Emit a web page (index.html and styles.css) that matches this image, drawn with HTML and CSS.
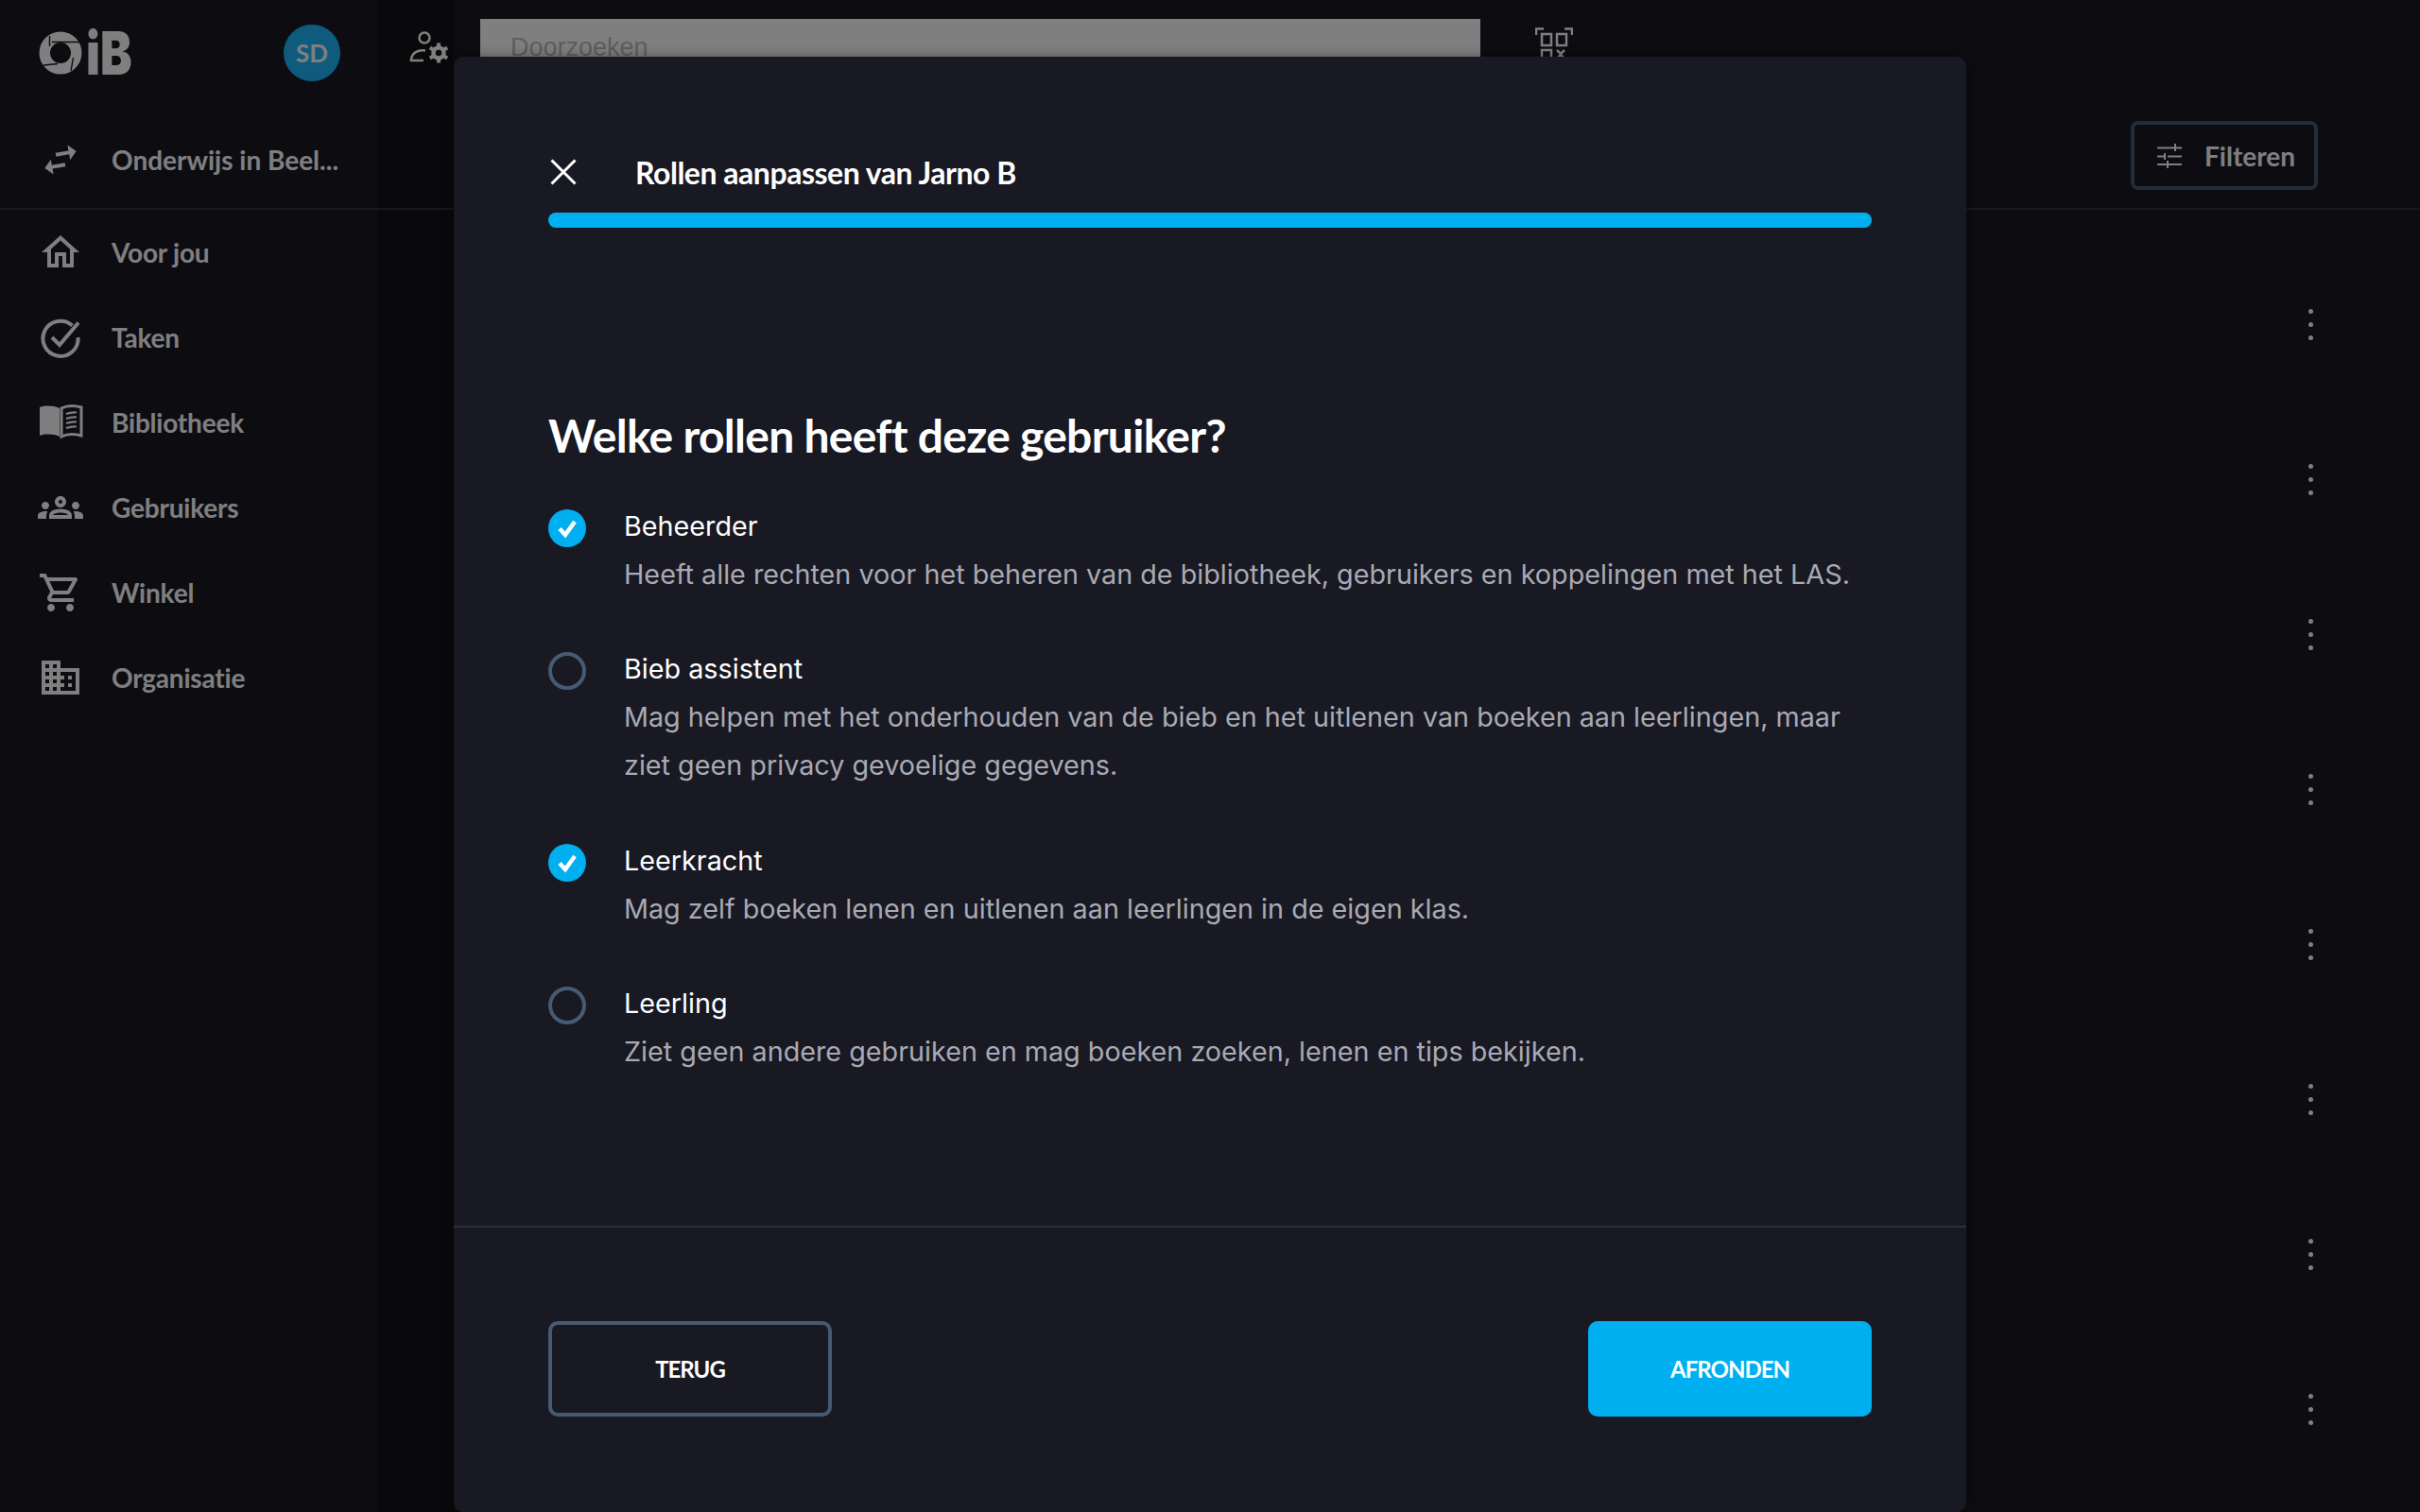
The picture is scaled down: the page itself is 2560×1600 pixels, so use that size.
FILE: index.html
```html
<!DOCTYPE html>
<html lang="nl">
<head>
<meta charset="utf-8">
<title>Rollen aanpassen</title>
<link rel="stylesheet" href="styles.css">
</head>
<body>
<div class="app">
  <aside class="sidebar">
    <div class="brand">
      <div class="logo">
        <svg class="logo-mark" viewBox="0 0 46 46"><circle cx="23" cy="23" r="16.750" fill="none" stroke="#fff" stroke-width="11.500"/><path d="M11.500 5V16M14 11.500H45M34 42L36.500 28M5 36L20 34.500" fill="none" stroke="#181923" stroke-width="1.400"/></svg>
        <span class="logo-text">iB</span>
      </div>
      <div class="avatar">SD</div>
    </div>
    <div class="switch">
      <svg class="nav-icon" viewBox="0 0 24 24"><path transform="rotate(-10 12 12)" d="M6.990 11L3 15l3.990 4v-3H14v-2H6.990v-3zM21 9l-3.990-4v3H10v2h7.010v3L21 9z"/></svg>
      <span class="nav-label nav-label-tight">Onderwijs in Beel...</span>
    </div>
    <nav class="nav">
      <a class="nav-item"><svg class="nav-icon" viewBox="0 0 24 24"><path d="M12 5.690l5 4.500V18h-2v-6H9v6H7v-7.810l5-4.500M12 3L2 12h3v8h6v-6h2v6h6v-8h3L12 3z"/></svg><span class="nav-label">Voor jou</span></a>
      <a class="nav-item"><svg class="nav-icon" viewBox="0 0 48 48"><path d="M36.500 11.500A18.600 18.600 0 1 0 42.600 24" fill="none" stroke="#fff" stroke-width="4"/><path d="M15 24l8 8L43 8.500" fill="none" stroke="#fff" stroke-width="4"/></svg><span class="nav-label">Taken</span></a>
      <a class="nav-item"><svg class="nav-icon" viewBox="0 0 48 48"><path d="M2 8c6-2 14-2 21 1v30c-7-3-15-3-21-1z"/><path d="M25 9c6-3 14-3 21-1v30c-7-2-15-2-21 1z" fill="none" stroke="#fff" stroke-width="3"/><path d="M30 15c4-1.500 7-1.800 11-1.500M30 20c4-1.500 7-1.800 11-1.500M30 25c4-1.500 7-1.800 11-1.500M30 30c4-1.500 7-1.800 11-1.500" fill="none" stroke="#fff" stroke-width="2.200"/></svg><span class="nav-label">Bibliotheek</span></a>
      <a class="nav-item"><svg class="nav-icon" viewBox="0 0 24 24"><path d="M4 13c1.100 0 2-.9 2-2 0-1.100-.9-2-2-2s-2 .9-2 2c0 1.100.9 2 2 2zm1.130 1.100c-.37-.06-.74-.1-1.130-.1-.99 0-1.930.21-2.780.58C.48 14.900 0 15.620 0 16.430V18h4.500v-1.610c0-.83.23-1.610.63-2.290zM20 13c1.100 0 2-.9 2-2 0-1.100-.9-2-2-2s-2 .9-2 2c0 1.100.9 2 2 2zm4 3.430c0-.81-.48-1.530-1.220-1.850-.85-.37-1.790-.58-2.780-.58-.39 0-.76.04-1.130.1.4.68.63 1.460.63 2.290V18H24v-1.570zm-7.760-2.780C15.070 13.140 13.630 12.750 12 12.750c-1.630 0-3.070.39-4.240.9C6.680 14.130 6 15.210 6 16.390V18h12v-1.610c0-1.180-.68-2.260-1.760-2.740zM8.070 16c.09-.23.13-.39.91-.69.97-.38 1.990-.56 3.020-.56s2.050.18 3.020.56c.77.3.81.46.91.69H8.070zM12 8c.55 0 1 .45 1 1s-.45 1-1 1-1-.45-1-1 .45-1 1-1m0-2c-1.660 0-3 1.340-3 3s1.340 3 3 3 3-1.340 3-3-1.340-3-3-3z"/></svg><span class="nav-label">Gebruikers</span></a>
      <a class="nav-item"><svg class="nav-icon" viewBox="0 0 24 24"><path d="M15.550 13c.75 0 1.410-.41 1.750-1.030l3.580-6.490c.37-.66-.11-1.480-.87-1.480H5.210l-.94-2H1v2h2l3.600 7.590-1.350 2.440C4.520 15.370 5.480 17 7 17h12v-2H7l1.100-2h7.450zM6.160 6h12.150l-2.760 5H8.530L6.160 6zM7 18c-1.100 0-1.990.9-1.990 2S5.900 22 7 22s2-.9 2-2-.9-2-2-2zm10 0c-1.100 0-1.990.9-1.990 2s.89 2 1.990 2 2-.9 2-2-.9-2-2-2z"/></svg><span class="nav-label">Winkel</span></a>
      <a class="nav-item"><svg class="nav-icon" viewBox="0 0 24 24"><path d="M12 7V3H2v18h20V7H12zM6 19H4v-2h2v2zm0-4H4v-2h2v2zm0-4H4V9h2v2zm0-4H4V5h2v2zm4 12H8v-2h2v2zm0-4H8v-2h2v2zm0-4H8V9h2v2zm0-4H8V5h2v2zm10 12h-8v-2h2v-2h-2v-2h2v-2h-2V9h8v10zm-2-8h-2v2h2v-2zm0 4h-2v2h2v-2z"/></svg><span class="nav-label">Organisatie</span></a>
    </nav>
  </aside>
  <main class="main">
    <header class="main-head">
      <div class="topbar">
        <svg class="user-gear" viewBox="0 0 42 34"><circle cx="16" cy="7" r="5.500" fill="none" stroke="#fff" stroke-width="2.500"/><path d="M17 20.500C9 19.500 3 23 2 29.500V31H15" fill="none" stroke="#fff" stroke-width="2.500"/><circle cx="31" cy="23" r="5.500" fill="none" stroke="#fff" stroke-width="4.500"/><path d="M31 12.500v4.500M31 29v4.500M21.800 17.500l4 2.300M36.200 26.200l4 2.300M21.800 28.500l4-2.300M36.200 19.800l4-2.300" stroke="#fff" stroke-width="4"/></svg>
        <div class="search">Doorzoeken</div>
        <svg class="qr" viewBox="0 0 40 40" fill="none" stroke="#fff" stroke-width="2.500"><path d="M1 8V1.500H9M31 1.500H39V8M1 32v6.500H9M31 38.500H39V32"/><rect x="7" y="7" width="10" height="12"/><rect x="23" y="7" width="10" height="12"/><rect x="7" y="24" width="10" height="10"/><path d="M23 24l4 4 4-4M23 33l4-4 4 4"/></svg>
      </div>
      <button class="filter"><svg class="tune" viewBox="0 0 26 26" fill="none" stroke="#fff" stroke-width="2"><path d="M0 4.500H26M19 0V8M0 13.500H8M11 13.500H26M8 10V17M0 22H26M11 18V26"/></svg>Filteren</button>
    </header>
    <section class="rows">
      <div class="row"><span class="kebab"><i></i><i></i><i></i></span></div>
      <div class="row"><span class="kebab"><i></i><i></i><i></i></span></div>
      <div class="row"><span class="kebab"><i></i><i></i><i></i></span></div>
      <div class="row"><span class="kebab"><i></i><i></i><i></i></span></div>
      <div class="row"><span class="kebab"><i></i><i></i><i></i></span></div>
      <div class="row"><span class="kebab"><i></i><i></i><i></i></span></div>
      <div class="row"><span class="kebab"><i></i><i></i><i></i></span></div>
      <div class="row"><span class="kebab"><i></i><i></i><i></i></span></div>
    </section>
  </main>
</div>
<div class="overlay"></div>
<div class="modal">
  <div class="modal-body">
    <div class="modal-title">
      <svg class="close" viewBox="0 0 28 28"><path d="M1.500 1.500L26.500 26.500M26.500 1.500L1.500 26.500" fill="none" stroke="#fff" stroke-width="3"/></svg>
      <span>Rollen aanpassen van Jarno B</span>
    </div>
    <div class="progress"></div>
    <h1 class="question">Welke rollen heeft deze gebruiker?</h1>
    <div class="options">
      <div class="option">
        <span class="radio radio-on"><svg viewBox="0 0 40 40"><path d="M12 20.500L18 27L28 13" fill="none" stroke="#fff" stroke-width="4.500"/></svg></span>
        <div class="option-text"><div class="option-name">Beheerder</div><p class="option-desc">Heeft alle rechten voor het beheren van de bibliotheek, gebruikers en koppelingen met het LAS.</p></div>
      </div>
      <div class="option">
        <span class="radio"></span>
        <div class="option-text"><div class="option-name">Bieb assistent</div><p class="option-desc">Mag helpen met het onderhouden van de bieb en het uitlenen van boeken aan leerlingen, maar ziet geen privacy gevoelige gegevens.</p></div>
      </div>
      <div class="option">
        <span class="radio radio-on"><svg viewBox="0 0 40 40"><path d="M12 20.500L18 27L28 13" fill="none" stroke="#fff" stroke-width="4.500"/></svg></span>
        <div class="option-text"><div class="option-name">Leerkracht</div><p class="option-desc">Mag zelf boeken lenen en uitlenen aan leerlingen in de eigen klas.</p></div>
      </div>
      <div class="option">
        <span class="radio"></span>
        <div class="option-text"><div class="option-name">Leerling</div><p class="option-desc">Ziet geen andere gebruiken en mag boeken zoeken, lenen en tips bekijken.</p></div>
      </div>
    </div>
  </div>
  <footer class="modal-foot">
    <button class="btn btn-ghost">TERUG</button>
    <button class="btn btn-primary">AFRONDEN</button>
  </footer>
</div>
</body>
</html>
```
FILE: styles.css
```css
* { box-sizing: border-box; }
html, body { margin: 0; height: 100%; }
body { background: #181923; color: #fff; font-family: Lato, "Noto Sans", sans-serif; overflow: hidden; position: relative; width: 2560px; height: 1600px; }

.app { display: flex; height: 1600px; }
.sidebar { width: 400px; flex: none; }
.brand { height: 130px; display: flex; align-items: flex-start; justify-content: space-between; padding: 26px 40px 0 41px; }
.logo { display: flex; align-items: center; height: 60px; gap: 4px; }
.logo-mark { width: 46px; height: 46px; }
.logo-text { font-family: Inter, sans-serif; font-weight: 900; font-size: 63px; line-height: 60px; transform: scaleX(.8); transform-origin: left center; }
.avatar { width: 60px; height: 60px; border-radius: 50%; background: #1eb6fc; display: flex; align-items: center; justify-content: center; font-size: 26px; font-weight: 700; }
.switch { height: 92px; display: flex; align-items: center; padding: 0 0 12px 40px; border-bottom: 2px solid #30323f; }
.nav { display: flex; flex-direction: column; }
.nav-item { height: 90px; display: flex; align-items: center; padding-left: 40px; }
.nav-icon { width: 48px; height: 48px; fill: #fff; flex: none; }
.nav-label { margin-left: 30px; font-size: 28px; font-weight: 700; white-space: nowrap; letter-spacing: -.2px; }
.nav-label-tight { letter-spacing: 0; }

.main { flex: 1; min-width: 0; background: linear-gradient(90deg, #121318 80px, #181923 80px); }
.main-head { height: 222px; border-bottom: 2px solid #30323f; position: relative; display: flex; flex-direction: column; }
.topbar { display: flex; align-items: flex-start; padding: 20px 0 0 33px; }
.user-gear { width: 42px; height: 34px; margin-top: 13px; }
.search { width: 1058px; height: 60px; margin-left: 33px; background: #fff; color: #bdbdbd; font-family: "Liberation Sans", sans-serif; font-size: 27px; padding: 15px 0 0 32px; }
.qr { width: 40px; height: 40px; margin: 9px 0 0 58px; }
.filter { align-self: flex-end; margin: 48px 108px 0 0; width: 198px; height: 73px; border: 4px solid #475a72; border-radius: 8px; background: transparent; color: #fff; font-family: Lato, sans-serif; font-weight: 700; font-size: 28px; display: flex; align-items: center; padding: 0 0 0 24px; }
.tune { width: 26px; height: 26px; margin-right: 24px; }
.rows { height: 1378px; padding: 39px 0 0; }
.row { height: 164px; display: flex; align-items: center; justify-content: flex-end; padding-right: 113px; }
.kebab { display: flex; flex-direction: column; gap: 9px; }
.kebab i { width: 5px; height: 5px; border-radius: 50%; background: #fff; display: block; }

.overlay { position: absolute; inset: 0; background: rgba(0,0,0,.5); }
.modal { position: absolute; left: 480px; top: 60px; width: 1600px; height: 1540px; background: #181923; border-radius: 10px; box-shadow: 0 0 14px rgba(0,0,0,.35); display: flex; flex-direction: column; }
.modal-body { height: 1239px; padding: 107px 100px 0; border-bottom: 2px solid #2e2d3d; }
.modal-title { display: flex; align-items: center; height: 30px; font-size: 32px; font-weight: 700; letter-spacing: -.48px; padding-left: 2px; }
.close { width: 28px; height: 28px; margin-right: 62px; }
.progress { height: 16px; margin-top: 28px; border-radius: 8px; background: #00aff0; }
.question { margin: 0; padding-top: 191px; font-size: 48px; line-height: 58px; font-weight: 700; letter-spacing: -.72px; }
.options { display: flex; flex-direction: column; gap: 49.5px; margin-top: 40.5px; }
.option { display: flex; gap: 40px; }
.radio { width: 40px; height: 40px; flex: none; border-radius: 50%; border: 4px solid #475a72; margin-top: 8px; }
.radio-on { background: #00aff0; border: 0; }
.radio svg { display: block; width: 40px; height: 40px; }
.option-text { flex: 1; font-family: Inter, sans-serif; font-size: 28.75px; line-height: 51px; }
.option-name { color: #fff; }
.option-desc { margin: 0; color: #a9aab3; }
.modal-foot { flex: 1; display: flex; justify-content: space-between; padding: 99px 100px 0; }
.btn { width: 300px; height: 101px; border-radius: 10px; font-family: Lato, sans-serif; font-size: 24px; font-weight: 700; letter-spacing: -1px; color: #fff; }
.btn-ghost { background: transparent; border: 4px solid #475a72; }
.btn-primary { background: #00aff0; border: 0; }
```
